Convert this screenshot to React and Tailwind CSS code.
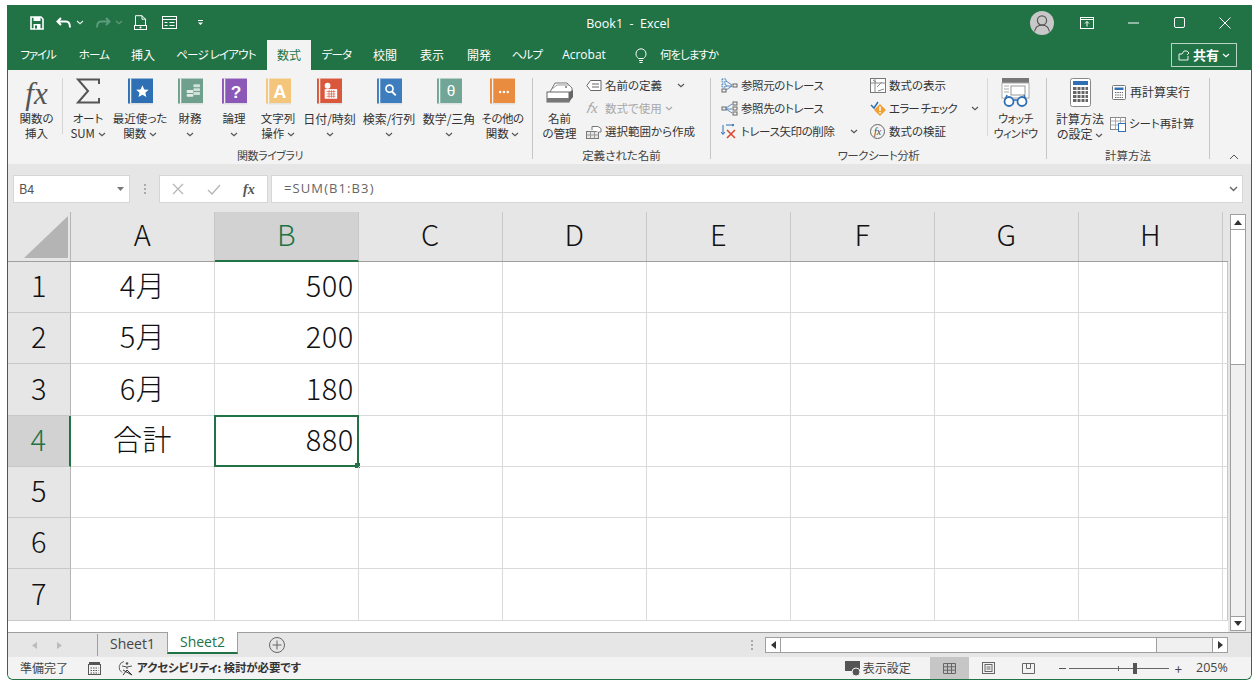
import React from 'react';

const Chev = ({ c = '#555', className = '' }) => (
  <svg width="8" height="5" viewBox="0 0 8 5" className={`inline-block ${className}`}>
    <path d="M1 1l3 2.6L7 1" fill="none" stroke={c} strokeWidth="1.2" />
  </svg>
);

const Book = ({ color, children }) => (
  <svg width="25" height="28" viewBox="0 0 26 28">
    <rect x="0" y="0" width="26" height="26" fill={color} />
    <rect x="2" y="0" width="1.4" height="26" fill="#f3f3f3" />
    <rect x="2" y="25.5" width="24" height="1.5" fill="#dfe3e3" />
    {children}
  </svg>
);

const Large = ({ w, icon, lines, className = '' }) => (
  <div className={`flex flex-col items-center ${className}`} style={{ width: w }}>
    <div className="h-[33px] flex items-start justify-center">{icon}</div>
    <div className="h-[15px] leading-[15px] whitespace-nowrap">{lines[0]}</div>
    <div className="h-[15px] leading-[15px] whitespace-nowrap">{lines[1]}</div>
  </div>
);

const GroupLabel = ({ children, className = 'text-[11.5px]' }) => (
  <div className={`h-[12px] leading-[16px] text-center text-[#444] whitespace-nowrap ${className}`}>{children}</div>
);

const SmallRow = ({ icon, iconW = 'w-[19px]', children, disabled, className = '' }) => (
  <div className={`h-[23px] flex items-center whitespace-nowrap ${disabled ? 'text-[#a8a8a8]' : 'text-[#333]'} ${className}`}>
    <span className={`${iconW} flex justify-start shrink-0 tracking-normal`}>{icon}</span>
    {children}
  </div>
);

const tabs = [
  ['ファイル', 'w-[58px] text-[11.5px] tracking-[-1.2px]'],
  ['ホーム', 'w-[54px] text-[11.5px] tracking-[-0.8px]'],
  ['挿入', 'w-[44px]'],
  ['ページ レイアウト', 'w-[102px] text-[11.5px] tracking-[-0.8px]'],
  ['数式', 'w-[44px]'],
  ['データ', 'w-[51px] text-[11.5px] tracking-[-0.8px]'],
  ['校閲', 'w-[46px]'],
  ['表示', 'w-[48px]'],
  ['開発', 'w-[46px]'],
  ['ヘルプ', 'w-[50px] text-[11.5px] tracking-[-0.8px]'],
];

const cols = ['A', 'B', 'C', 'D', 'E', 'F', 'G', 'H'];
const rows = [
  { n: 1, a: '4月', b: '500', h: 'h-[51px]' },
  { n: 2, a: '5月', b: '200', h: 'h-[51px]' },
  { n: 3, a: '6月', b: '180', h: 'h-[52px]' },
  { n: 4, a: '合計', b: '880', h: 'h-[51px]' },
  { n: 5, h: 'h-[51px]' },
  { n: 6, h: 'h-[51px]' },
  { n: 7, h: 'h-[52px]' },
];

const TitleBar = () => (
  <div className="h-[35px] bg-[#217346] flex items-center text-white">
    <div className="w-[520px] flex items-center pl-[22px]">
      <svg width="14" height="14" viewBox="0 0 14 14">
        <path d="M1 1h10l2 2v10H1z" fill="none" stroke="#fff" strokeWidth="1.6" />
        <rect x="3.5" y="1" width="7" height="4" fill="#fff" />
        <rect x="3.5" y="8" width="7" height="5" fill="#fff" />
        <rect x="5" y="9.5" width="2" height="3" fill="#217346" />
      </svg>
      <svg width="16" height="12" viewBox="0 0 16 12" className="ml-[12px]">
        <path d="M5 1L1.5 4.5 5 8M2 4.5h8c3 0 4 2 4 6" fill="none" stroke="#fff" strokeWidth="2" />
      </svg>
      <Chev c="#dfeee6" className="ml-[4px]" />
      <svg width="16" height="12" viewBox="0 0 16 12" className="ml-[11px]">
        <path d="M11 1l3.5 3.5L11 8M14 4.5H6c-3 0-4 2-4 6" fill="none" stroke="#5e9a7c" strokeWidth="2" />
      </svg>
      <Chev c="#5e9a7c" className="ml-[4px]" />
      <svg width="13" height="15" viewBox="0 0 13 15" className="ml-[11px]">
        <path d="M1.5 10V.7h6.5l3.5 3.5V10M8 .7v3.5h3.5" fill="none" stroke="#fff" strokeWidth="1" />
        <rect x=".5" y="10.5" width="12" height="4" fill="none" stroke="#fff" strokeWidth="1" />
        <circle cx="6.5" cy="12.5" r="1" fill="#fff" />
      </svg>
      <svg width="15" height="13" viewBox="0 0 15 13" className="ml-[15px]">
        <rect x=".5" y=".5" width="14" height="12" fill="none" stroke="#fff" />
        <path d="M.5 3.5h14M2.5 6.5h3M2.5 9.5h3M7.5 6.5h5M7.5 9.5h5" stroke="#fff" />
      </svg>
      <svg width="7" height="7" viewBox="0 0 7 7" className="ml-[20px]">
        <path d="M1 1.5h5" stroke="#fff" />
        <path d="M1 3.5h5L3.5 6z" fill="#fff" />
      </svg>
    </div>
    <div className="w-[200px] pt-[3px] text-center text-[12.5px] font-['Open_Sans',sans-serif] whitespace-pre">Book1  -  Excel</div>
    <div className="flex-1 flex items-center justify-end pr-[20px]">
      <div className="w-[24px] h-[24px] rounded-full bg-[#c8c8c8] overflow-hidden flex items-center justify-center">
        <svg width="24" height="24" viewBox="0 0 24 24">
          <circle cx="12" cy="9.5" r="4.6" fill="none" stroke="#555" strokeWidth="1.2" />
          <path d="M4.5 20.5c1-5 4-6.500 7.500-6.500s6.500 1.500 7.500 6.500" fill="none" stroke="#555" strokeWidth="1.200" />
        </svg>
      </div>
      <svg width="14" height="12" viewBox="0 0 14 12" className="ml-[26px]">
        <rect x=".5" y=".5" width="13" height="11" fill="none" stroke="#fff" />
        <path d="M.5 2.500h13" stroke="#fff" />
        <path d="M7 9.500V4.500M5 6.500l2-2 2 2" fill="none" stroke="#fff" />
      </svg>
      <svg width="11" height="2" viewBox="0 0 11 2" className="ml-[34px]"><path d="M0 1h11" stroke="#fff" /></svg>
      <svg width="11" height="11" viewBox="0 0 11 11" className="ml-[35px]"><rect x=".5" y=".5" width="10" height="10" rx="1.500" fill="none" stroke="#fff" /></svg>
      <svg width="12" height="12" viewBox="0 0 12 12" className="ml-[34px]"><path d="M.5.500l11 11M11.500.500l-11 11" stroke="#fff" /></svg>
    </div>
  </div>
);

const TabRow = () => (
  <div className="h-[30px] bg-[#217346] flex items-stretch text-white text-[12px]">
    <div className="w-[1px]" />
    {tabs.map(([t, w]) => (
      <div
        key={t}
        className={`${w} flex items-center justify-center whitespace-nowrap ${t === '数式' ? 'bg-[#f3f3f3] text-[#217346]' : ''}`}
      >
        {t}
      </div>
    ))}
    <div className="w-[70px] ml-[-3px] flex items-center justify-center font-['Open_Sans',sans-serif]">Acrobat</div>
    <div className="w-[14px] flex items-center ml-[15px] mr-[12px]">
      <svg width="14" height="17" viewBox="0 0 14 17">
        <path d="M4.500 11.500C3 10 2 9 2 6.800a5 5 0 0 1 10 0c0 2.200-1 3.200-2.500 4.700z" fill="none" stroke="#fff" />
        <path d="M5 13.500h4M5.500 15.500h3" stroke="#fff" />
      </svg>
    </div>
    <div className="flex items-center text-[11.5px] tracking-[-1px]">何をしますか</div>
    <div className="flex-1 flex items-center justify-end pr-[14px]">
      <div className="w-[66px] h-[24px] border border-[#b9d4c5] flex items-center justify-center gap-[3px]">
        <svg width="12" height="12" viewBox="0 0 12 12">
          <path d="M1 5h3l2-3h3l2 2-2 2v0M1 5v6h9V7" fill="none" stroke="#fff" strokeWidth=".9" />
        </svg>
        <span className="font-bold text-[13px]">共有</span>
        <Chev c="#fff" />
      </div>
    </div>
  </div>
);

const FunctionGroup = () => (
  <div className="w-[525px] h-[81px] border-r border-[#c6c6c6] flex flex-col">
    <div className="flex h-[69px]">
      <Large
        w={54}
        className="pl-[3px]"
        icon={<span className="font-['Liberation_Serif',serif] italic text-[31px] leading-[31px] text-[#555]">fx</span>}
        lines={['関数の', '挿入']}
      />
      <div className="w-[1px] h-[56px] bg-[#d4d4d4]" />
      <Large
        w={50}
        icon={
          <svg width="24" height="26" viewBox="0 0 24 26">
            <path d="M23 6V1.500H2L12 13 2 24.500h21V20" fill="none" stroke="#555" strokeWidth="2" />
          </svg>
        }
        lines={['オート', <>SUM <Chev /></>]}
      />
      <Large
        w={54}
        icon={
          <Book color="#2f70b5">
            <path d="M15 7l1.900 4.300 4.600.4-3.500 3 1.100 4.500-4.100-2.400-4.100 2.400 1.100-4.500-3.500-3 4.600-.4z" fill="#fff" />
          </Book>
        }
        lines={['最近使った', <>関数 <Chev /></>]}
      />
      <Large
        w={46}
        icon={
          <Book color="#6fa08e">
            <rect x="16" y="6" width="7" height="3" rx="1" fill="#cfe0d8" />
            <rect x="16" y="10" width="7" height="3" rx="1" fill="#cfe0d8" />
            <rect x="16" y="14" width="7" height="3" rx="1" fill="#cfe0d8" />
            <rect x="9" y="12" width="7" height="3" rx="1" fill="#e2ece7" />
            <rect x="9" y="16" width="7" height="3" rx="1" fill="#e2ece7" />
          </Book>
        }
        lines={['財務', <Chev />]}
      />
      <Large
        w={42}
        icon={
          <Book color="#8c58b8">
            <text x="14.500" y="20" textAnchor="middle" fill="#fff" fontSize="18" fontWeight="700" fontFamily="Liberation Sans">?</text>
          </Book>
        }
        lines={['論理', <Chev />]}
      />
      <Large
        w={46}
        icon={
          <Book color="#f4c67c">
            <text x="14.500" y="20.500" textAnchor="middle" fill="#fff" fontSize="19" fontWeight="700" fontFamily="Liberation Sans">A</text>
          </Book>
        }
        lines={['文字列', <>操作 <Chev /></>]}
      />
      <Large
        w={57}
        icon={
          <Book color="#d9573a">
            <rect x="8" y="11" width="13" height="10" fill="#fff" />
            <path d="M10 13.500h9M10 16h9M10 18.500h9M12.500 12v8M15 12v8M17.500 12v8" stroke="#d9573a" strokeWidth=".7" />
            <circle cx="11" cy="7.500" r="3" fill="#fff" />
          </Book>
        }
        lines={[<span className="text-[12px]">日付/時刻</span>, <Chev />]}
      />
      <Large
        w={62}
        icon={
          <Book color="#3d7dbd">
            <circle cx="13" cy="10.500" r="3.700" fill="none" stroke="#fff" strokeWidth="1.700" />
            <path d="M15.500 13.500l4 4" stroke="#fff" strokeWidth="2" />
          </Book>
        }
        lines={[<span className="text-[12px]">検索/行列</span>, <Chev />]}
      />
      <Large
        w={58}
        icon={
          <Book color="#71a595">
            <text x="14.500" y="18.500" textAnchor="middle" fill="#fff" fontSize="16" fontFamily="Liberation Sans">θ</text>
          </Book>
        }
        lines={[<span className="text-[12px]">数学/三角</span>, <Chev />]}
      />
      <Large
        w={49}
        icon={
          <Book color="#e98c3f">
            <circle cx="10.500" cy="14" r="1.300" fill="#fff" />
            <circle cx="14.500" cy="14" r="1.300" fill="#fff" />
            <circle cx="18.500" cy="14" r="1.300" fill="#fff" />
          </Book>
        }
        lines={[<span className="tracking-[-0.5px]">その他の</span>, <>関数 <Chev /></>]}
      />
    </div>
    <GroupLabel className="text-[11px] tracking-[-0.5px]">関数ライブラリ</GroupLabel>
  </div>
);

const NamesGroup = () => (
  <div className="w-[178px] h-[81px] border-r border-[#c6c6c6] flex flex-col">
    <div className="flex h-[69px]">
      <Large
        w={53}
        icon={
          <svg width="28" height="26" viewBox="0 0 28 26" className="mt-[2px]">
            <path d="M4 12L9 3h12l5 5v9" fill="#fff" stroke="#777" />
            <path d="M6 9l5-4h12" fill="none" stroke="#999" />
            <rect x="1" y="12" width="22" height="10" fill="#fff" stroke="#666" />
            <rect x="1" y="18" width="22" height="4" fill="#777" />
            <path d="M23 22l4-5v-7l-4 2z" fill="#666" />
            <circle cx="20" cy="7" r="1" fill="#777" />
          </svg>
        }
        lines={['名前', 'の管理']}
      />
      <div className="flex flex-col mt-[-4px] w-[124px]">
        <SmallRow
          icon={
            <svg width="16" height="11" viewBox="0 0 16 11">
              <path d="M4.500.5h10.500v10H4.500L.8 5.500z" fill="#fff" stroke="#666" />
              <path d="M6 4h7M6 7h7" stroke="#666" />
            </svg>
          }
        >
          名前の定義<Chev className="ml-[15px]" />
        </SmallRow>
        <SmallRow
          disabled
          icon={<span className="font-['Liberation_Serif',serif] italic text-[15px] leading-[15px] text-[#a8a8a8]">𝑓x</span>}
        >
          数式で使用<Chev c="#a8a8a8" className="ml-[3px]" />
        </SmallRow>
        <SmallRow
          icon={
            <svg width="16" height="14" viewBox="0 0 16 14">
              <rect x=".5" y="6.500" width="12" height="7" fill="#e6e6e6" stroke="#777" />
              <path d="M.5 10h12M4.500 6.500v7M8.500 6.500v7" stroke="#999" />
              <path d="M6 5V1.500h6l3 2V7h-2" fill="#fff" stroke="#777" />
            </svg>
          }
        >
          選択範囲から作成
        </SmallRow>
      </div>
    </div>
    <GroupLabel>定義された名前</GroupLabel>
  </div>
);

const AuditGroup = () => (
  <div className="w-[336px] h-[81px] border-r border-[#c6c6c6] flex flex-col">
    <div className="flex h-[69px]">
      <div className="flex flex-col mt-[-4px] w-[159px] pl-[10px] tracking-[-0.4px]">
        <SmallRow
          iconW="w-[20px]"
          icon={
            <svg width="17" height="15" viewBox="0 0 17 15">
              <rect x="1" y="1" width="4" height="3" fill="none" stroke="#2f70b5" strokeDasharray="1 .6" />
              <rect x="1" y="6" width="4" height="3" fill="none" stroke="#2f70b5" strokeDasharray="1 .6" />
              <rect x="1" y="11" width="4" height="3" fill="none" stroke="#666" />
              <rect x="12" y="6" width="4" height="3" fill="none" stroke="#666" />
              <path d="M5 3l6 4M5 8h6M5 12l6-4" stroke="#2f70b5" strokeWidth=".8" />
            </svg>
          }
        >
          参照元のトレース
        </SmallRow>
        <SmallRow
          iconW="w-[20px]"
          icon={
            <svg width="17" height="15" viewBox="0 0 17 15">
              <rect x="12" y="1" width="4" height="3" fill="none" stroke="#666" />
              <rect x="12" y="6" width="4" height="3" fill="none" stroke="#666" />
              <rect x="12" y="11" width="4" height="3" fill="none" stroke="#666" />
              <rect x="1" y="6" width="4" height="3" fill="none" stroke="#666" />
              <path d="M5 7l6-4M5 8h6M5 8l6 4" stroke="#2f70b5" strokeWidth=".8" />
            </svg>
          }
        >
          参照先のトレース
        </SmallRow>
        <SmallRow
          iconW="w-[20px]"
          icon={
            <svg width="16" height="15" viewBox="0 0 16 15">
              <path d="M2 1v9M0 8l2 2.500L4 8M5 1h8M11 0l2 1-2 1" fill="none" stroke="#2f70b5" />
              <path d="M6 6l8 8M14 6l-8 8" stroke="#d9452c" strokeWidth="1.500" />
            </svg>
          }
        >
          トレース矢印の削除<Chev className="ml-[15px]" />
        </SmallRow>
      </div>
      <div className="flex flex-col mt-[-4px] w-[117px]">
        <SmallRow
          iconW="w-[19px]"
          icon={
            <svg width="16" height="15" viewBox="0 0 16 15">
              <rect x=".5" y=".5" width="15" height="14" fill="#fff" stroke="#777" />
              <path d="M.5 5h15M5 .5v14M3 2l3 2M7 9l5-5M8 13l6-2" stroke="#888" />
            </svg>
          }
        >
          数式の表示
        </SmallRow>
        <SmallRow
          iconW="w-[19px]"
          className="tracking-[-0.8px]"
          icon={
            <svg width="17" height="16" viewBox="0 0 17 16">
              <path d="M1 4l3 3 4-6" fill="none" stroke="#2f70b5" strokeWidth="1.500" />
              <path d="M10 3l6 6-6 6-6-6z" fill="#f0a030" />
              <path d="M10 5.500V10M10 11v1.500" stroke="#fff" strokeWidth="1.500" />
            </svg>
          }
        >
          エラー チェック<Chev className="ml-[14px]" />
        </SmallRow>
        <SmallRow
          iconW="w-[19px]"
          icon={
            <span className="w-[15px] h-[15px] rounded-full border border-[#666] flex items-center justify-center font-['Liberation_Serif',serif] italic text-[10px] leading-none text-[#444]">fx</span>
          }
        >
          数式の検証
        </SmallRow>
      </div>
      <div className="w-[1px] h-[58px] bg-[#d8d8d8]" />
      <Large
        w={55}
        className="text-[11px] tracking-[-0.6px]"
        icon={
          <svg width="30" height="30" viewBox="0 0 30 30">
            <rect x="1" y="0" width="27" height="5" fill="#777" />
            <rect x="1" y="5" width="27" height="15" fill="#fff" stroke="#aaa" />
            <rect x="10" y="8" width="14" height="9" fill="#fff" stroke="#999" />
            <path d="M3 8h5M3 11h5M3 14h5" stroke="#aaa" />
            <circle cx="8" cy="23.500" r="4.500" fill="#fff" stroke="#2f70b5" strokeWidth="1.800" />
            <circle cx="21" cy="23.500" r="4.500" fill="#fff" stroke="#2f70b5" strokeWidth="1.800" />
            <path d="M12 22h5M4 22l2-5M25 22l-2-5" stroke="#2f70b5" strokeWidth="1.500" />
          </svg>
        }
        lines={['ウォッチ', 'ウィンドウ']}
      />
    </div>
    <GroupLabel className="text-[11.5px] tracking-[-0.5px]">ワークシート分析</GroupLabel>
  </div>
);

const CalcGroup = () => (
  <div className="w-[163px] h-[81px] border-r border-[#c6c6c6] flex flex-col">
    <div className="flex h-[69px]">
      <Large
        w={66}
        className="text-[12px]"
        icon={
          <svg width="21" height="29" viewBox="0 0 21 29">
            <rect x=".5" y=".5" width="20" height="28" rx="2" fill="#fff" stroke="#888" />
            <rect x="3" y="3" width="15" height="4" fill="#2f70b5" />
            <rect x="3" y="9" width="15" height="15" fill="#666" />
            <path d="M3 12.500h15M3 16.500h15M3 20.500h15M7 9v15M11 9v15M15 9v15" stroke="#fff" />
          </svg>
        }
        lines={['計算方法', <>の設定 <Chev /></>]}
      />
      <div className="flex flex-col mt-[-2px] ml-[-4px]">
        <div className="h-[32px] flex items-center whitespace-nowrap pl-[2px] text-[12px]">
          <svg width="14" height="15" viewBox="0 0 14 15" className="mr-[4px] ml-[1px]">
            <rect x=".5" y=".5" width="13" height="14" rx="1" fill="#fff" stroke="#777" />
            <rect x="2.500" y="2.500" width="9" height="2.500" fill="#2f70b5" />
            <path d="M3 7.500h8M3 10h8M3 12.500h8" stroke="#666" strokeDasharray="1.500 .8" />
          </svg>
          再計算実行
        </div>
        <div className="h-[32px] flex items-center whitespace-nowrap pl-[1px]">
          <svg width="16" height="15" viewBox="0 0 16 15" className="mr-[3px]">
            <rect x=".5" y=".5" width="15" height="12" fill="#fff" stroke="#888" />
            <path d="M.5 4h15M.5 8h15M5.500.5v12M10.500.5v12" stroke="#aaa" />
            <rect x="8.500" y="6.500" width="7" height="8" fill="#fff" stroke="#2f70b5" />
          </svg>
          シート再計算
        </div>
      </div>
    </div>
    <GroupLabel>計算方法</GroupLabel>
  </div>
);

const Ribbon = () => (
  <div className="h-[94px] bg-[#f3f3f3] pt-[8px] flex text-[11.5px] text-[#333]">
    <FunctionGroup />
    <NamesGroup />
    <AuditGroup />
    <CalcGroup />
    <div className="flex-1 flex items-end justify-end pr-[12px]">
      <svg width="10" height="6" viewBox="0 0 10 6" className="mb-[4px]">
        <path d="M1 5l4-4 4 4" fill="none" stroke="#555" />
      </svg>
    </div>
  </div>
);

const FormulaBar = () => (
  <div className="h-[48px] bg-[#e6e6e6] pt-[11px] pl-[5px] flex items-start shrink-0">
    <div className="w-[117px] h-[28px] bg-white border border-[#d6d6d6] flex items-center justify-between pl-[5px] pr-[5px] text-[12.5px] text-[#555]">
      B4
      <svg width="7" height="4" viewBox="0 0 7 4"><path d="M0 0h7L3.500 4z" fill="#777" /></svg>
    </div>
    <div className="w-[29px] h-[28px] flex flex-col items-center justify-center gap-[2px]">
      <span className="w-[2px] h-[2px] bg-[#aaa]" />
      <span className="w-[2px] h-[2px] bg-[#aaa]" />
      <span className="w-[2px] h-[2px] bg-[#aaa]" />
    </div>
    <div className="w-[109px] h-[28px] bg-white border border-[#d6d6d6] flex items-center pl-[12px]">
      <svg width="12" height="12" viewBox="0 0 12 12"><path d="M1 1l10 10M11 1L1 11" stroke="#b5b5b5" strokeWidth="1.200" /></svg>
      <svg width="14" height="12" viewBox="0 0 14 12" className="ml-[23px]"><path d="M1 7l4 4 8-9" fill="none" stroke="#b5b5b5" strokeWidth="1.300" /></svg>
      <span className="ml-[22px] font-['Liberation_Serif',serif] italic font-bold text-[14px] text-[#555]">fx</span>
    </div>
    <div className="w-[972px] h-[28px] ml-[3px] bg-white border border-[#d6d6d6] flex items-center justify-between pl-[12px] pr-[4px] text-[13px] text-[#666] tracking-[1.1px] font-['Open_Sans',sans-serif]">
      =SUM(B1:B3)
      <svg width="9" height="6" viewBox="0 0 9 6"><path d="M1 1l3.500 3.500L8 1" fill="none" stroke="#666" strokeWidth="1.400" /></svg>
    </div>
  </div>
);

const Sheet = () => (
  <div className="flex-1 flex min-h-0 overflow-hidden font-light text-[29px] tracking-[0.6px] text-[#111]">
    <div className="w-[1220px] shrink-0 overflow-hidden">
      {/* column headers */}
      <div className="h-[50px] flex bg-[#e6e6e6] border-b border-[#9f9f9f]">
        <div className="w-[63px] border-r border-[#b5b5b5] flex items-end justify-end pr-[2px] pb-[3px]">
          <svg width="44" height="42" viewBox="0 0 44 42"><path d="M44 0v42H0z" fill="#b4b4b4" /></svg>
        </div>
        {cols.map((c) => (
          <div
            key={c}
            className={`w-[144px] border-r border-[#c8c8c8] flex items-center justify-center pb-[5px] ${
              c === 'B' ? 'bg-[#d2d2d2] text-[#217346] border-b-2 border-b-[#217346] mb-[-1px]' : ''
            }`}
          >
            {c}
          </div>
        ))}
      </div>
      {rows.map((r) => (
        <div key={r.n} className={`${r.h} flex`}>
          <div
            className={`w-[63px] flex items-center justify-center pb-[4px] border-b border-[#c8c8c8] ${
              r.n === 4
                ? 'bg-[#d2d2d2] text-[#217346] border-r-2 border-r-[#217346]'
                : 'bg-[#e6e6e6] border-r border-r-[#b5b5b5]'
            }`}
          >
            {r.n}
          </div>
          {cols.map((c) => (
            <div
              key={c}
              className={`w-[144px] relative border-r border-b border-[#dadada] flex items-center pb-[4px] ${
                c === 'A' ? 'justify-center' : 'justify-end pr-[4px]'
              }`}
            >
              {c === 'A' && r.a}
              {c === 'B' && r.b}
              {c === 'B' && r.n === 4 && (
                <div className="absolute inset-[-1px] border-2 border-[#217346]">
                  <span className="absolute right-[-3px] bottom-[-3px] w-[5px] h-[5px] bg-[#217346]" />
                </div>
              )}
            </div>
          ))}
          <div className="w-[5px] border-b border-r border-[#dadada] border-r-[#c8c8c8]" />
        </div>
      ))}
    </div>
    <div className="flex-1 bg-[#e6e6e6] pl-[2px] pt-[2px] flex flex-col">
      <div className="w-[16px] h-[417px] border border-[#9f9f9f] bg-[#f0f0f0] flex flex-col">
        <div className="h-[15px] bg-white border-b border-[#9f9f9f] flex items-center justify-center">
          <svg width="8" height="5" viewBox="0 0 8 5"><path d="M4 0l4 5H0z" fill="#333" /></svg>
        </div>
        <div className="h-[135px] bg-white border-b border-[#9f9f9f]" />
        <div className="flex-1" />
        <div className="h-[14px] bg-white border-t border-[#9f9f9f] flex items-center justify-center">
          <svg width="8" height="5" viewBox="0 0 8 5"><path d="M4 5l4-5H0z" fill="#333" /></svg>
        </div>
      </div>
    </div>
  </div>
);

const SheetTabs = () => (
  <div className="h-[25px] shrink-0 bg-[#e6e6e6] border-t border-[#9f9f9f] flex items-stretch text-[14px] font-['Open_Sans',sans-serif]">
    <div className="w-[90px] flex items-center pl-[24px] gap-[20px] border-r border-[#9f9f9f] my-[1px]">
      <svg width="5" height="7" viewBox="0 0 5 7"><path d="M5 0v7L0 3.500z" fill="#bbb" /></svg>
      <svg width="5" height="7" viewBox="0 0 5 7"><path d="M0 0v7l5-3.500z" fill="#bbb" /></svg>
    </div>
    <div className="w-[69px] flex items-center justify-center pb-[4px] text-[#444]">Sheet1</div>
    <div className="w-[71px] h-[22px] mt-[-1px] bg-white border-x border-[#9f9f9f] border-b-2 border-b-[#217346] flex items-center justify-center pb-[1px] text-[#217346]">Sheet2</div>
    <div className="w-[77px] flex items-center justify-center">
      <svg width="16" height="16" viewBox="0 0 16 16">
        <circle cx="8" cy="8" r="7.500" fill="none" stroke="#666" />
        <path d="M8 3.500v9M3.500 8h9" stroke="#666" />
      </svg>
    </div>
    <div className="w-[450px] flex items-center justify-end pr-[12px]">
      <div className="flex flex-col gap-[2px]">
        <span className="w-[2px] h-[2px] bg-[#aaa]" />
        <span className="w-[2px] h-[2px] bg-[#aaa]" />
        <span className="w-[2px] h-[2px] bg-[#aaa]" />
      </div>
    </div>
    <div className="w-[463px] h-[16px] mt-[4px] flex border border-[#9f9f9f] bg-[#f0f0f0]">
      <div className="w-[15px] bg-white border-r border-[#9f9f9f] flex items-center justify-center">
        <svg width="5" height="8" viewBox="0 0 5 8"><path d="M5 0v8L0 4z" fill="#333" /></svg>
      </div>
      <div className="w-[376px] bg-white border-r border-[#9f9f9f]" />
      <div className="flex-1" />
      <div className="w-[15px] bg-white border-l border-[#9f9f9f] flex items-center justify-center">
        <svg width="5" height="8" viewBox="0 0 5 8"><path d="M0 0v8l5-4z" fill="#333" /></svg>
      </div>
    </div>
  </div>
);

const StatusBar = () => (
  <div className="h-[22px] shrink-0 bg-[#f3f3f3] rounded-b-[5px] flex items-center text-[12px] text-[#444]">
    <div className="w-[80px] pl-[12px] whitespace-nowrap">準備完了</div>
    <svg width="13" height="13" viewBox="0 0 13 13">
      <rect x=".5" y="2.500" width="12" height="10" fill="none" stroke="#555" />
      <rect x="1" y="0" width="11" height="3" fill="#555" />
      <path d="M2.500 6h8M2.500 8.500h8M2.500 11h8" stroke="#555" strokeDasharray="1.500 1" />
    </svg>
    <svg width="17" height="16" viewBox="0 0 17 16" className="ml-[17px]">
      <path d="M6 1.500a6 6 0 0 0-2 11" fill="none" stroke="#666" />
      <circle cx="9" cy="3.500" r="1.300" fill="#555" />
      <path d="M4 6l5 1 5-1M9 7v2" stroke="#555" fill="none" />
      <path d="M5 15l4-5 5 5M5 10l9 5" stroke="#333" fill="none" />
    </svg>
    <span className="ml-[2px] font-bold text-[11.5px] tracking-[-0.15px] text-[#333] whitespace-nowrap">アクセシビリティ: 検討が必要です</span>
    <div className="flex-1 flex items-center justify-end h-full pr-[14px]">
      <svg width="16" height="15" viewBox="0 0 16 15" className="mr-[2px]">
        <rect x="0" y="0" width="15" height="10" fill="#555" />
        <circle cx="11" cy="11" r="4" fill="#555" stroke="#f3f3f3" />
      </svg>
      <span className="w-[67px] whitespace-nowrap">表示設定</span>
      <div className="w-[39px] h-full bg-[#c6c6c6] flex items-center justify-center">
        <svg width="13" height="11" viewBox="0 0 13 11">
          <path d="M.5.500h12v10H.5zM.5 3.800h12M.5 7.200h12M4.500.500v10M8.500.500v10" fill="none" stroke="#666" />
        </svg>
      </div>
      <div className="w-[40px] flex items-center justify-center">
        <svg width="13" height="12" viewBox="0 0 13 12">
          <rect x=".5" y=".5" width="12" height="11" fill="none" stroke="#666" />
          <rect x="3" y="2.500" width="7" height="7" fill="none" stroke="#666" />
          <path d="M4.500 5h4M4.500 7h4" stroke="#666" />
        </svg>
      </div>
      <div className="w-[40px] flex items-center justify-center">
        <svg width="13" height="11" viewBox="0 0 13 11">
          <path d="M.5.500h12v10H.5zM4.500.500v5h4v-5" fill="none" stroke="#666" />
        </svg>
      </div>
      <span className="h-[1px] bg-[#555] ml-[10px] w-[7px]" />
      <div className="relative w-[100px] h-[1px] bg-[#666] ml-[3px]">
        <span className="absolute left-[49px] top-[-2px] w-[1px] h-[5px] bg-[#666]" />
        <span className="absolute left-[64px] top-[-5px] w-[4px] h-[11px] bg-[#555]" />
      </div>
      <span className="ml-[6px] mr-[14px] text-[13px] leading-none">+</span>
      <span className="w-[41px] font-['Open_Sans',sans-serif] whitespace-nowrap text-[12.5px]">205%</span>
    </div>
  </div>
);

export default function App() {
  return (
    <div className="w-[1257px] h-[686px] bg-white pt-[5px] pl-[7px] overflow-hidden font-['Noto_Sans_CJK_JP','Noto_Sans',sans-serif] [font-feature-settings:'palt']">
      <div className="w-[1245px] h-[675px] border border-t-0 border-[#217346] rounded-b-[6px] flex flex-col overflow-hidden">
        <TitleBar />
        <TabRow />
        <Ribbon />
        <FormulaBar />
        <Sheet />
        <SheetTabs />
        <StatusBar />
      </div>
    </div>
  );
}
